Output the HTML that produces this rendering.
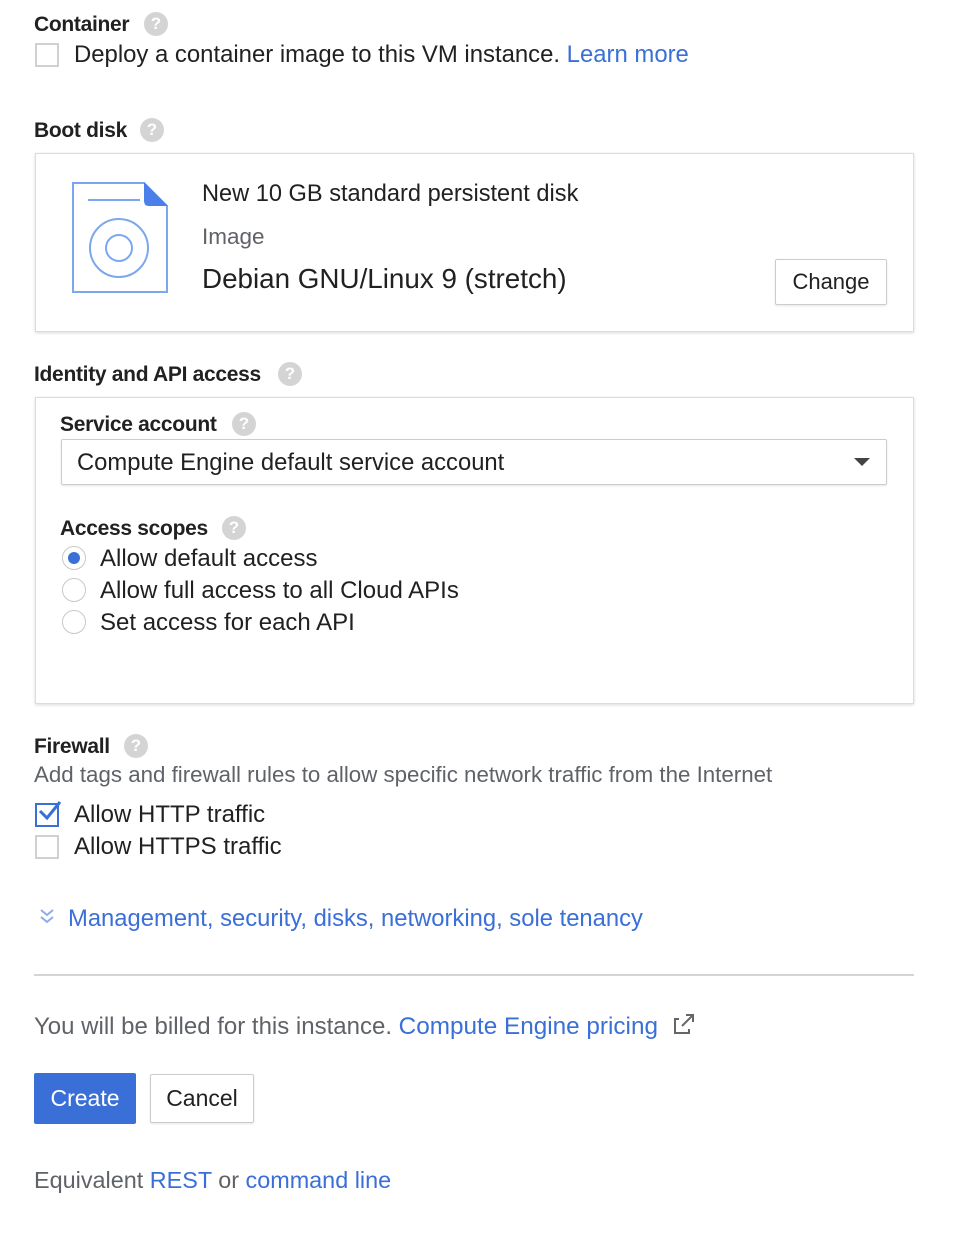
<!DOCTYPE html>
<html><head><meta charset="utf-8"><style>
body{margin:0;width:966px;height:1238px;background:#fff;font-family:"Liberation Sans",Arial,sans-serif;color:#202124;position:relative;overflow:hidden}
.a{position:absolute;white-space:nowrap;line-height:1}
.h{font-size:21px;font-weight:bold;color:#212121;letter-spacing:-0.3px}
.t{font-size:24px;color:#212121}
.g{color:#5f6368}
.l{color:#3b6fd8}
.q{position:absolute;width:24px;height:24px;border-radius:50%;background:#d4d4d4;color:#fff;font-size:17px;font-weight:bold;text-align:center;line-height:24px}
.cb{position:absolute;width:20px;height:20px;border:2px solid #d0d0d0}
.box{position:absolute;border:1px solid #dcdcdc;box-shadow:0 1px 3px rgba(0,0,0,.15);background:#fff}
.r{position:absolute;width:24px;height:24px;border:1.5px solid #c8c8c8;border-radius:50%;box-sizing:border-box}
</style></head><body>
<div class="a h" style="left:34px;top:14px">Container</div><div class="q" style="left:144px;top:12px">?</div>
<div class="cb" style="left:35px;top:43px"></div>
<div class="a t" style="left:74px;top:43px;font-size:23.9px">Deploy a container image to this VM instance. <span class="l">Learn more</span></div>

<div class="a h" style="left:34px;top:120px">Boot disk</div><div class="q" style="left:140px;top:118px">?</div>
<div class="box" style="left:35px;top:153px;width:877px;height:177px"></div>
<svg class="a" style="left:70px;top:180px" width="100" height="116" viewBox="0 0 100 116">
<path d="M3 3H74L97 26V112H3Z" fill="none" stroke="#7aa7ee" stroke-width="2"/>
<path d="M74 2L98 26H79Q74 26 74 21Z" fill="#4a80e8"/>
<line x1="18" y1="20" x2="70" y2="20" stroke="#7aa7ee" stroke-width="2"/>
<circle cx="49" cy="68" r="29" fill="none" stroke="#7aa7ee" stroke-width="2"/>
<circle cx="49" cy="68" r="13" fill="none" stroke="#7aa7ee" stroke-width="2"/>
</svg>
<div class="a" style="left:202px;top:183px;font-size:23.6px;color:#212121">New 10 GB standard persistent disk</div>
<div class="a g" style="left:202px;top:226px;font-size:22.5px">Image</div>
<div class="a" style="left:202px;top:265px;font-size:27.8px;color:#212121">Debian GNU/Linux 9 (stretch)</div>
<div class="a" style="left:775px;top:259px;width:110px;height:44px;border:1px solid #ccc;border-radius:2px;box-shadow:0 1px 2px rgba(0,0,0,.1);font-size:22px;text-align:center;line-height:44px;color:#212121">Change</div>

<div class="a h" style="left:34px;top:364px">Identity and API access</div><div class="q" style="left:278px;top:362px">?</div>
<div class="box" style="left:35px;top:397px;width:877px;height:305px"></div>
<div class="a h" style="left:60px;top:414px">Service account</div><div class="q" style="left:232px;top:412px">?</div>
<div class="a" style="left:61px;top:439px;width:824px;height:44px;border:1px solid #ccc;border-radius:2px;box-shadow:0 1px 2px rgba(0,0,0,.1)"></div>
<div class="a" style="left:77px;top:451px;font-size:23.8px;color:#212121">Compute Engine default service account</div>
<div class="a" style="left:854px;top:458px;width:0;height:0;border-left:8px solid transparent;border-right:8px solid transparent;border-top:8px solid #444"></div>
<div class="a h" style="left:60px;top:518px">Access scopes</div><div class="q" style="left:222px;top:516px">?</div>
<div class="r" style="left:62px;top:546px"></div><div class="a" style="left:68px;top:552px;width:12px;height:12px;border-radius:50%;background:#3b6fd8"></div>
<div class="r" style="left:62px;top:578px"></div>
<div class="r" style="left:62px;top:610px"></div>
<div class="a t" style="left:100px;top:547px">Allow default access</div>
<div class="a t" style="left:100px;top:579px">Allow full access to all Cloud APIs</div>
<div class="a t" style="left:100px;top:611px">Set access for each API</div>

<div class="a h" style="left:34px;top:736px">Firewall</div><div class="q" style="left:124px;top:734px">?</div>
<div class="a g" style="left:34px;top:764px;font-size:22.3px">Add tags and firewall rules to allow specific network traffic from the Internet</div>
<div class="cb" style="left:35px;top:803px;border-color:#3b6fd8"></div>
<svg class="a" style="left:37px;top:799px" width="26" height="26"><path d="M3 12L10 19L23 3" fill="none" stroke="#3b6fd8" stroke-width="3"/></svg>
<div class="a t" style="left:74px;top:803px">Allow HTTP traffic</div>
<div class="cb" style="left:35px;top:835px"></div>
<div class="a t" style="left:74px;top:835px">Allow HTTPS traffic</div>
<svg class="a" style="left:39px;top:907px" width="16" height="20"><path d="M2 3L8 8L14 3M2 10L8 15L14 10" fill="none" stroke="#8cabea" stroke-width="2"/></svg>
<div class="a t l" style="left:68px;top:907px;font-size:23.8px">Management, security, disks, networking, sole tenancy</div>
<div class="a" style="left:34px;top:974px;width:880px;height:2px;background:#d5d5d5"></div>
<div class="a g" style="left:34px;top:1015px;font-size:24px">You will be billed for this instance. <span class="l" style="font-size:24.3px">Compute Engine pricing</span></div>
<svg class="a" style="left:673px;top:1012px" width="24" height="24"><path d="M6 7H2V21H16V17M9 14L20 3M13 3H20V10" fill="none" stroke="#666" stroke-width="2"/></svg>
<div class="a" style="left:34px;top:1073px;width:102px;height:51px;background:#3b6fd8;border-radius:2px;color:#fff;font-size:23px;text-align:center;line-height:51px">Create</div>
<div class="a" style="left:150px;top:1074px;width:102px;height:47px;border:1px solid #ccc;border-radius:2px;box-shadow:0 1px 2px rgba(0,0,0,.1);font-size:23px;text-align:center;line-height:47px;color:#212121">Cancel</div>
<div class="a g" style="left:34px;top:1169px;font-size:23.4px">Equivalent <span class="l">REST</span> or <span class="l">command line</span></div>
</body></html>
